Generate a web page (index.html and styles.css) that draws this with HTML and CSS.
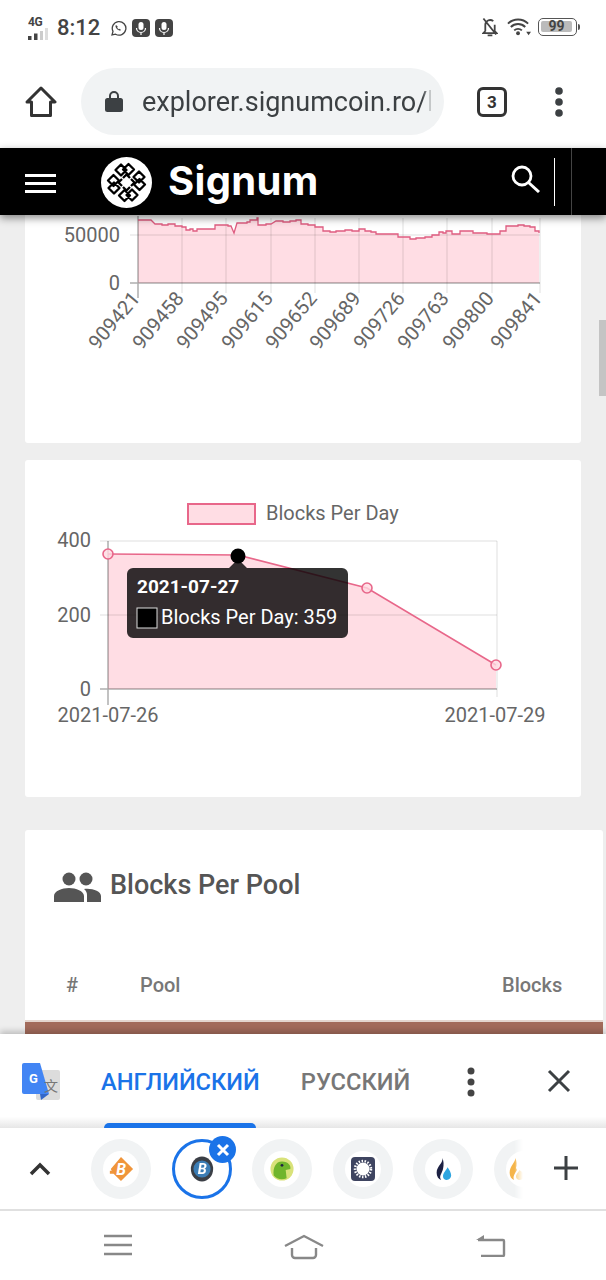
FILE: index.html
```html
<!DOCTYPE html>
<html lang="en">
<head>
<meta charset="utf-8">
<title>Signum Explorer</title>
<link rel="stylesheet" href="styles.css">
</head>
<body>
<div class="status">
  <div class="status-left">
    <div class="net">
      <span class="net-label">4G</span>
      <svg class="net-bars" width="20" height="12" viewBox="0 0 20 12"><rect x="0" y="8" width="3.500" height="4" fill="#444"/><rect x="6" y="5.500" width="3.500" height="6.500" fill="#444"/><rect x="12" y="3" width="3" height="9" fill="#ccc"/><rect x="17" y="0" width="3" height="12" fill="#ddd"/></svg>
    </div>
    <span class="clock">8:12</span>
    <svg class="wa" width="17" height="17" viewBox="0 0 17 17"><path d="M2 15l1-3.600A6.800 6.800 0 1 1 5.600 14.200z" fill="none" stroke="#444" stroke-width="1.300"/><path d="M6 5c-1 1-.5 2.500 1 4s3 2 4 1l-1.300-1.300-.9.500c-.8-.4-1.300-1-1.600-1.700l.5-.9z" fill="#444"/></svg>
    <svg class="mic" width="18" height="18" viewBox="0 0 18 18"><rect width="18" height="18" rx="4" fill="#444"/><rect x="6.500" y="3" width="5" height="8" rx="2.500" fill="#fff"/><path d="M4.500 9a4.500 4.500 0 0 0 9 0M9 13.500V16" fill="none" stroke="#fff" stroke-width="1.200"/></svg>
    <svg class="mic" width="18" height="18" viewBox="0 0 18 18"><rect width="18" height="18" rx="4" fill="#444"/><rect x="6.500" y="3" width="5" height="8" rx="2.500" fill="#fff"/><path d="M4.500 9a4.500 4.500 0 0 0 9 0M9 13.500V16" fill="none" stroke="#fff" stroke-width="1.200"/></svg>
  </div>
  <div class="status-right">
    <svg class="bell" width="16" height="20" viewBox="0 0 17 20"><path d="M3.500 14.500V8a5.200 5.200 0 0 1 8.500-4.200M13.500 7.500v7l2 2H1.500l2-2M6 18.800h5M1.500 1L15 18" fill="none" stroke="#444" stroke-width="1.900"/></svg>
    <svg class="wifi" width="24" height="18" viewBox="0 0 25 18"><path d="M1 5.500a15 15 0 0 1 21 0M4 9a10.500 10.500 0 0 1 15 0M7.500 12.500a6 6 0 0 1 8 0" fill="none" stroke="#444" stroke-width="2"/><circle cx="11.500" cy="15.500" r="2" fill="#444"/><path d="M20 14h5l-2.500 3.500z" fill="#444"/></svg>
    <div class="battery"><span class="battery-fill">99</span></div>
    <span class="battery-tip"></span>
  </div>
</div>

<div class="toolbar">
  <svg class="home" width="32" height="31" viewBox="0 0 32 31"><path d="M2 16L16 2l14 14h-4.500v13.500h-19V16z" fill="none" stroke="#333" stroke-width="3" stroke-linejoin="round"/></svg>
  <div class="omnibox">
    <svg class="lock" width="18" height="22" viewBox="0 0 18 22"><path d="M5 9V6a4 4 0 0 1 8 0v3" fill="none" stroke="#3c4043" stroke-width="2"/><rect y="8" width="18" height="14" rx="2.500" fill="#3c4043"/></svg>
    <span class="url">explorer.signumcoin.ro/b</span>
  </div>
  <div class="tabcount">3</div>
  <svg class="kebab" width="8" height="30" viewBox="0 0 8 30"><circle cx="4" cy="4" r="3.800" fill="#3c4043"/><circle cx="4" cy="15" r="3.800" fill="#3c4043"/><circle cx="4" cy="26" r="3.800" fill="#3c4043"/></svg>
</div>

<header class="site">
  <svg class="burger" width="31" height="19" viewBox="0 0 31 19"><path d="M0 1.500h31M0 9.500h31M0 17.500h31" stroke="#fff" stroke-width="3"/></svg>
  <svg class="logo" width="51" height="51" viewBox="0 0 51 51">
    <circle cx="25.500" cy="25.500" r="25.500" fill="#fff"/>
    <g fill="none" stroke="#000" stroke-width="2.300" stroke-linejoin="round">
      <g id="knot">
        <path d="M20 7.500l5.500 5.500-5.500 5.500-5.500-5.500zM27.500 7l5.500 5.500-5.500 5.500-5.500-5.500zM25 17l4 4M26 17l-4 4"/>
      </g>
      <use href="#knot" transform="rotate(90 25.500 25.500)"/>
      <use href="#knot" transform="rotate(180 25.500 25.500)"/>
      <use href="#knot" transform="rotate(270 25.500 25.500)"/>
    </g>
  </svg>
  <span class="brand">Signum</span>
  <div class="header-end">
    <svg class="search" width="30" height="28" viewBox="0 0 30 28"><circle cx="11" cy="11" r="9" fill="none" stroke="#fff" stroke-width="2.800"/><path d="M17.500 17.500L28 27" stroke="#fff" stroke-width="3"/></svg>
    <span class="divider"></span>
    <span class="edge"></span>
  </div>
</header>

<main class="page">
  <section class="card card-a">
    <svg class="chart" width="556" height="228" viewBox="25 215 556 228">
      <path class="area" d="M138 283V220H151L155 224H162V225H168V224H175V226H182V227H186V230H190V229H193V231H197V229H215V225H228V226H231L234 233L237 223H247V222H250V220H257V218H258V225H266V224H271L276 221H283V222H290V221H296V220H301V224H308V225H315V227H323V231H330V232H336V231H345V230H352V231H359V229H365V231H371V232H376V234H398V237H410V239H416V238H425V237H432V235H439V232H443V233H446V231H452V234H460V231H473V233H487V234H500V231H506V226H518V225H524V226H530V227H535V231H539V233V283z"/>
      <g class="grid">
        <path d="M130 235H540M182 218V293M226 218V293M271 218V293M315 218V293M359 218V293M403 218V293M447 218V293M492 218V293M540 218V293"/>
      </g>
      <path class="axis" d="M138 216V298M130 283H540"/>
      <path class="line" d="M138 220H151L155 224H162V225H168V224H175V226H182V227H186V230H190V229H193V231H197V229H215V225H228V226H231L234 233L237 223H247V222H250V220H257V218H258V225H266V224H271L276 221H283V222H290V221H296V220H301V224H308V225H315V227H323V231H330V232H336V231H345V230H352V231H359V229H365V231H371V232H376V234H398V237H410V239H416V238H425V237H432V235H439V232H443V233H446V231H452V234H460V231H473V233H487V234H500V231H506V226H518V225H524V226H530V227H535V231H539V233"/>
      <text class="tick" x="120" y="242" text-anchor="end">50000</text>
      <text class="tick" x="120" y="290" text-anchor="end">0</text>
      <text class="tick" text-anchor="end" transform="translate(141 299) rotate(-50)">909421</text>
      <text class="tick" text-anchor="end" transform="translate(185 299) rotate(-50)">909458</text>
      <text class="tick" text-anchor="end" transform="translate(229 299) rotate(-50)">909495</text>
      <text class="tick" text-anchor="end" transform="translate(274 299) rotate(-50)">909615</text>
      <text class="tick" text-anchor="end" transform="translate(318 299) rotate(-50)">909652</text>
      <text class="tick" text-anchor="end" transform="translate(362 299) rotate(-50)">909689</text>
      <text class="tick" text-anchor="end" transform="translate(406 299) rotate(-50)">909726</text>
      <text class="tick" text-anchor="end" transform="translate(450 299) rotate(-50)">909763</text>
      <text class="tick" text-anchor="end" transform="translate(495 299) rotate(-50)">909800</text>
      <text class="tick" text-anchor="end" transform="translate(543 299) rotate(-50)">909841</text>
    </svg>
  </section>

  <section class="card card-b">
    <svg class="chart" width="556" height="337" viewBox="25 460 556 337">
      <rect class="legend" x="188" y="504" width="67" height="20"/>
      <text class="tick" x="266" y="520">Blocks Per Day</text>
      <path class="area" d="M108 689V554L238 555L367 588L496 665V689z"/>
      <path class="grid" d="M100 541H497M100 615H497M497 541V697"/>
      <path class="axis" d="M108 541V705M100 689H497"/>
      <path class="line" d="M108 554L238 555L367 588L496 665"/>
      <circle class="pt" cx="108" cy="554" r="5"/>
      <circle class="pt" cx="367" cy="588" r="5"/>
      <circle class="pt" cx="496" cy="665" r="5"/>
      <text class="tick" x="91" y="547" text-anchor="end">400</text>
      <text class="tick" x="91" y="622" text-anchor="end">200</text>
      <text class="tick" x="91" y="696" text-anchor="end">0</text>
      <text class="tick" x="108" y="722" text-anchor="middle">2021-07-26</text>
      <text class="tick" x="495" y="722" text-anchor="middle">2021-07-29</text>
      <path class="tip" d="M133 568H229L238 559L247 568H342a6 6 0 0 1 6 6V632a6 6 0 0 1-6 6H133a6 6 0 0 1-6-6V574a6 6 0 0 1 6-6z"/>
      <circle cx="238" cy="556" r="7.500" fill="#000"/>
      <text class="tip-title" x="137" y="593">2021-07-27</text>
      <rect x="137" y="608" width="20" height="20" fill="#000" stroke="#ddd" stroke-width="1"/>
      <text class="tip-body" x="161" y="624">Blocks Per Day: 359</text>
    </svg>
  </section>

  <section class="card card-c">
    <div class="card-title">
      <svg width="47" height="30" viewBox="0 0 47 30"><circle cx="15" cy="7" r="6.500" fill="#555"/><circle cx="32" cy="7" r="6.500" fill="#555"/><path d="M0 30v-6c0-5 8-8 15-8s15 3 15 8v6zM33 30v-7c0-2.500-1-4.500-3-6 8-1 17 2 17 7v6z" fill="#555"/></svg>
      <h2>Blocks Per Pool</h2>
    </div>
    <div class="thead"><span class="th-num">#</span><span class="th-pool">Pool</span><span class="th-blocks">Blocks</span></div>
    <div class="row-brown"></div>
  </section>
  <div class="scroll-thumb"></div>
</main>

<div class="translate">
  <svg class="gt" width="38" height="38" viewBox="0 0 38 38">
    <rect x="14" y="7" width="24" height="30" rx="2" fill="#dcdcdc"/>
    <path d="M2 0H18L27 31H2a2 2 0 0 1-2-2V2a2 2 0 0 1 2-2z" fill="#4285f4"/>
    <path d="M18 31h9l-8 6z" fill="#3367c9"/>
    <text class="gt-g" x="7" y="20">G</text>
    <text class="gt-w" x="22" y="28">文</text>
  </svg>
  <div class="lang lang-on">АНГЛИЙСКИЙ<span class="lang-bar"></span></div>
  <div class="lang">РУССКИЙ</div>
  <svg class="t-kebab" width="8" height="30" viewBox="0 0 8 30"><circle cx="4" cy="4" r="3.500" fill="#444"/><circle cx="4" cy="15" r="3.500" fill="#444"/><circle cx="4" cy="26" r="3.500" fill="#444"/></svg>
  <svg class="t-close" width="24" height="24" viewBox="0 0 24 24"><path d="M2 2l20 20M22 2L2 22" stroke="#3c4043" stroke-width="3"/></svg>
</div>

<div class="tabstrip">
  <svg class="chev" width="22" height="14" viewBox="0 0 22 14"><path d="M2 12l9-9 9 9" fill="none" stroke="#333" stroke-width="3.500"/></svg>
  <div class="tabs">
    <div class="tab"><span class="fav"><svg width="26" height="26" viewBox="0 0 28 28"><path d="M14 1l13 13-13 13L6 19H2v-3h2l-1-2z" fill="#f0953a"/><text class="fav-b" x="9" y="20">B</text></svg></span></div>
    <div class="tab tab-on"><span class="fav"><svg width="24" height="26" viewBox="0 0 28 30"><ellipse cx="14" cy="15" rx="13" ry="14.500" fill="#3b3f46"/><circle cx="14" cy="15" r="10" fill="#3b7db5"/><text class="fav-b" x="9" y="21">B</text></svg></span></div>
    <div class="tab"><span class="fav"><svg width="24" height="24" viewBox="0 0 26 26"><circle cx="13" cy="13" r="12.500" fill="#d9e27a"/><path d="M4 20c-1-8 2-15 9-15s10 5 9 8l-5 1 1 9c-5 2-11 1-14-3z" fill="#70b52c"/><circle cx="13" cy="9" r="1.500" fill="#224"/></svg></span></div>
    <div class="tab"><span class="fav"><svg width="24" height="24" viewBox="0 0 24 24"><rect width="24" height="24" rx="4" fill="#3e4460"/><circle cx="12" cy="12" r="6.500" fill="#fff"/><circle cx="12" cy="12" r="8" fill="none" stroke="#fff" stroke-width="2.500" stroke-dasharray="1.500 1.500"/></svg></span></div>
    <div class="tab"><span class="fav"><svg width="20" height="24" viewBox="0 0 22 26"><path d="M10 1c2 5-6 9-6 16 0 4 2 7 5 8-3-4 1-7 2-12 1-4 1-9-1-12z" fill="#1c2143"/><path d="M16 11c-1 3-5 6-5 10 0 3 2 4 4 4 3 0 5-2 5-5s-2-6-4-9z" fill="#2ea5e0"/></svg></span></div>
    <div class="tab"><span class="fav fav-flame"><svg width="20" height="24" viewBox="0 0 22 26"><path d="M10 1c1 4-6 9-6 16 0 4 2 7 5 8-2-4 1-7 3-11l-1-2c1-3 1-8-1-11z" fill="#f5b54a"/><path d="M15 14c-2 3-4 5-4 7 0 3 2 4 4 4 3 0 5-2 5-5s-3-4-5-6z" fill="#f8d080"/></svg></span></div>
  </div>
  <span class="badge"><svg width="14" height="14" viewBox="0 0 14 14"><path d="M2 2l10 10M12 2L2 12" stroke="#fff" stroke-width="3"/></svg></span>
  <svg class="plus" width="26" height="26" viewBox="0 0 26 26"><path d="M13 1v24M1 13h24" stroke="#3c4043" stroke-width="3"/></svg>
</div>

<nav class="sysnav">
  <svg width="28" height="22" viewBox="0 0 28 22"><path d="M0 2h28M0 11h28M0 20h28" stroke="#888" stroke-width="2.400"/></svg>
  <svg width="40" height="26" viewBox="0 0 40 26"><path d="M1 12L20 2l19 10M8 14v7a3 3 0 0 0 3 3h18a3 3 0 0 0 3-3v-7" fill="none" stroke="#888" stroke-width="2.400"/></svg>
  <svg width="30" height="23" viewBox="0 0 30 23"><path d="M2 6h25a1 1 0 0 1 1 1v14a1 1 0 0 1-1 1H5" fill="none" stroke="#888" stroke-width="2.400"/><path d="M0 6l8-5v5z" fill="#888"/></svg>
</nav>
</body>
</html>
```

FILE: styles.css
```css
* { box-sizing: border-box; }
html, body { margin: 0; padding: 0; }
body {
  width: 606px;
  height: 1280px;
  overflow: hidden;
  display: flex;
  flex-direction: column;
  background: #fff;
  font-family: Roboto, "Liberation Sans", sans-serif;
}
svg { display: block; flex: none; }

.status {
  height: 60px;
  flex: none;
  display: flex;
  justify-content: space-between;
  align-items: flex-start;
  padding: 16px 26px 0 28px;
}
.status-left, .status-right { display: flex; align-items: center; }
.net { width: 20px; height: 22px; }
.net-label { display: block; font-size: 12px; font-weight: 700; line-height: 11px; color: #444; letter-spacing: -0.3px; }
.clock { margin-left: 9px; font-size: 22px; font-weight: 500; line-height: 24px; color: #444; width: 44px; }
.wa { margin-left: 9px; }
.mic { margin-left: 5px; }
.status-right { margin-top: 1px; }
.wifi { margin-left: 9px; }
.battery {
  margin-left: 7px;
  width: 39px;
  height: 18px;
  border: 1.500px solid #555;
  border-radius: 5px;
  padding: 2px;
}
.battery-tip { width: 2px; height: 6px; margin-left: 1px; background: #555; border-radius: 0 2px 2px 0; }
.battery-fill {
  display: block;
  width: 31px;
  height: 11px;
  background: #bbb;
  border-radius: 2px;
  font-size: 14px;
  font-weight: 700;
  line-height: 11px;
  text-align: center;
  color: #444;
}

.toolbar {
  height: 88px;
  flex: none;
  display: flex;
  align-items: center;
  padding: 0 0 5px 25px;
  background: #fff;
}
.omnibox {
  margin-left: 24px;
  width: 363px;
  height: 67px;
  border-radius: 34px;
  background: #f1f3f4;
  display: flex;
  align-items: center;
  padding: 0 13px 0 24px;
  overflow: hidden;
}
.lock { margin-top: -1px; }
.url {
  margin-left: 19px;
  width: 289px;
  overflow: hidden;
  white-space: nowrap;
  font-size: 27px;
  line-height: 34px;
  color: #3c4043;
  -webkit-mask-image: linear-gradient(90deg, #000 97%, rgba(0, 0, 0, 0.2));
  mask-image: linear-gradient(90deg, #000 97%, rgba(0, 0, 0, 0.2));
}
.tabcount {
  margin-left: 33px;
  width: 30px;
  height: 30px;
  border: 3px solid #333;
  border-radius: 6px;
  font-size: 17px;
  font-weight: 700;
  line-height: 24px;
  text-align: center;
  color: #333;
}
.kebab { margin-left: 48px; }

.site {
  height: 67px;
  flex: none;
  position: relative;
  z-index: 3;
  display: flex;
  align-items: center;
  padding-left: 25px;
  background: #000;
  box-shadow: 0 3px 8px rgba(0, 0, 0, 0.45);
}
.burger { margin-top: 3px; }
.logo { margin-left: 45px; margin-top: 1px; }
.brand {
  margin-left: 16px;
  font-family: Inter, "Open Sans", sans-serif;
  font-size: 40px;
  font-weight: 700;
  line-height: 44px;
  color: #fff;
  letter-spacing: 0.35px;
  margin-top: -2px;
}
.header-end { margin-left: auto; display: flex; align-items: stretch; height: 67px; }
.search { margin-top: 17px; margin-right: 13px; }
.divider { width: 1px; height: 48px; margin-top: 10px; background: #fff; }
.edge { width: 1px; margin-left: 16px; margin-right: 34px; background: #444; }

.page {
  flex: 1;
  min-height: 0;
  position: relative;
  overflow: hidden;
  background: #eee;
  padding: 0 0 0 25px;
}
.card { background: #fff; border-radius: 3px; }
.card-a { width: 556px; height: 228px; border-radius: 0 0 3px 3px; }
.card-b { width: 556px; height: 337px; margin-top: 17px; }
.card-c { width: 578px; margin-top: 33px; height: 220px; padding-top: 42px; }

.area { fill: #ffdde4; }
.grid { fill: none; stroke: rgba(0, 0, 0, 0.13); stroke-width: 1; }
.axis { fill: none; stroke: rgba(0, 0, 0, 0.32); stroke-width: 1.500; }
.line { fill: none; stroke: #e8678a; stroke-width: 1.600; }
.card-a .line { stroke: #df5c80; stroke-width: 1.300; }
.pt { fill: rgba(255, 217, 225, 0.8); stroke: #e8678a; stroke-width: 1.600; }
.legend { fill: #ffdde4; stroke: #e8678a; stroke-width: 2; }
.tick { font-family: Roboto, sans-serif; font-size: 20px; fill: #666; }
.tip { fill: rgba(0, 0, 0, 0.8); }
.tip-title { font-family: Roboto, sans-serif; font-size: 19px; font-weight: 700; fill: #fff; }
.tip-body { font-family: Roboto, sans-serif; font-size: 20px; fill: #fff; }

.card-title { display: flex; align-items: flex-start; height: 30px; margin-left: 29px; gap: 9px; }
.card-title h2 { margin: 0; font-size: 27px; font-weight: 500; line-height: 26px; color: #555; }
.thead {
  height: 24px;
  margin-top: 71px;
  display: flex;
  font-size: 20px;
  font-weight: 500;
  line-height: 24px;
  color: #777;
}
.th-num { margin-left: 41px; width: 74px; }
.th-pool { width: 362px; }
.th-blocks { width: 60px; }
.row-brown { height: 30px; margin-top: 23px; background: #a26b5b; border-top: 2px solid #e4d6cf; }
.scroll-thumb {
  position: absolute;
  top: 105px;
  right: 0;
  width: 7px;
  height: 76px;
  background: #c4c4c4;
}

.translate {
  height: 94px;
  flex: none;
  position: relative;
  z-index: 2;
  display: flex;
  align-items: flex-start;
  padding: 29px 0 0 22px;
  background: linear-gradient(#fff 88%, #e6e6e6);
  box-shadow: 0 -3px 6px rgba(0, 0, 0, 0.2);
}
.gt-g { font-family: Roboto, sans-serif; font-size: 13px; font-weight: 700; fill: #fff; }
.gt-w { font-family: "Noto Sans CJK SC", sans-serif; font-size: 14px; fill: #777; }
.lang {
  position: relative;
  margin-left: 41px;
  font-size: 23.700px;
  font-weight: 500;
  line-height: 38px;
  color: #777;
  white-space: nowrap;
}
.lang-on { color: #1a73e8; }
.lang-bar {
  position: absolute;
  left: 3px;
  right: 4px;
  top: 60px;
  height: 5px;
  border-radius: 5px 5px 0 0;
  background: #1a73e8;
}
.t-kebab { margin-left: 57px; margin-top: 4px; }
.t-close { margin-left: 72px; margin-top: 6px; }

.tabstrip {
  height: 83px;
  flex: none;
  position: relative;
  z-index: 2;
  display: flex;
  align-items: flex-start;
  padding: 11px 0 0 29px;
  background: #fff;
  border-bottom: 2px solid #e0e0e0;
}
.chev { margin-top: 23px; }
.tabs {
  margin-left: 40px;
  width: 432px;
  height: 62px;
  display: flex;
  gap: 20.600px;
  overflow: hidden;
  -webkit-mask-image: linear-gradient(90deg, #000 98%, transparent);
  mask-image: linear-gradient(90deg, #000 98%, transparent);
}
.tab {
  position: relative;
  flex: none;
  width: 60px;
  height: 60px;
  border-radius: 50%;
  background: #f1f3f4;
  display: flex;
  align-items: center;
  justify-content: center;
}
.fav {
  width: 36px;
  height: 36px;
  border-radius: 50%;
  background: #fff;
  display: flex;
  align-items: center;
  justify-content: center;
}
.fav-flame { justify-content: flex-start; }
.fav-b { font-family: Roboto, sans-serif; font-size: 17px; font-weight: 700; font-style: italic; fill: #fff; }
.tab-on { background: #fff; border: 3px solid #1a73e8; }
.plus { margin-left: 30px; margin-top: 16px; }
.badge {
  position: absolute;
  left: 209px;
  top: 8px;
  width: 27px;
  height: 27px;
  border-radius: 50%;
  background: #1a73e8;
  display: flex;
  align-items: center;
  justify-content: center;
}

.sysnav {
  height: 69px;
  flex: none;
  display: flex;
  align-items: flex-start;
  padding: 23px 0 0 104px;
  gap: 152px;
}
```
